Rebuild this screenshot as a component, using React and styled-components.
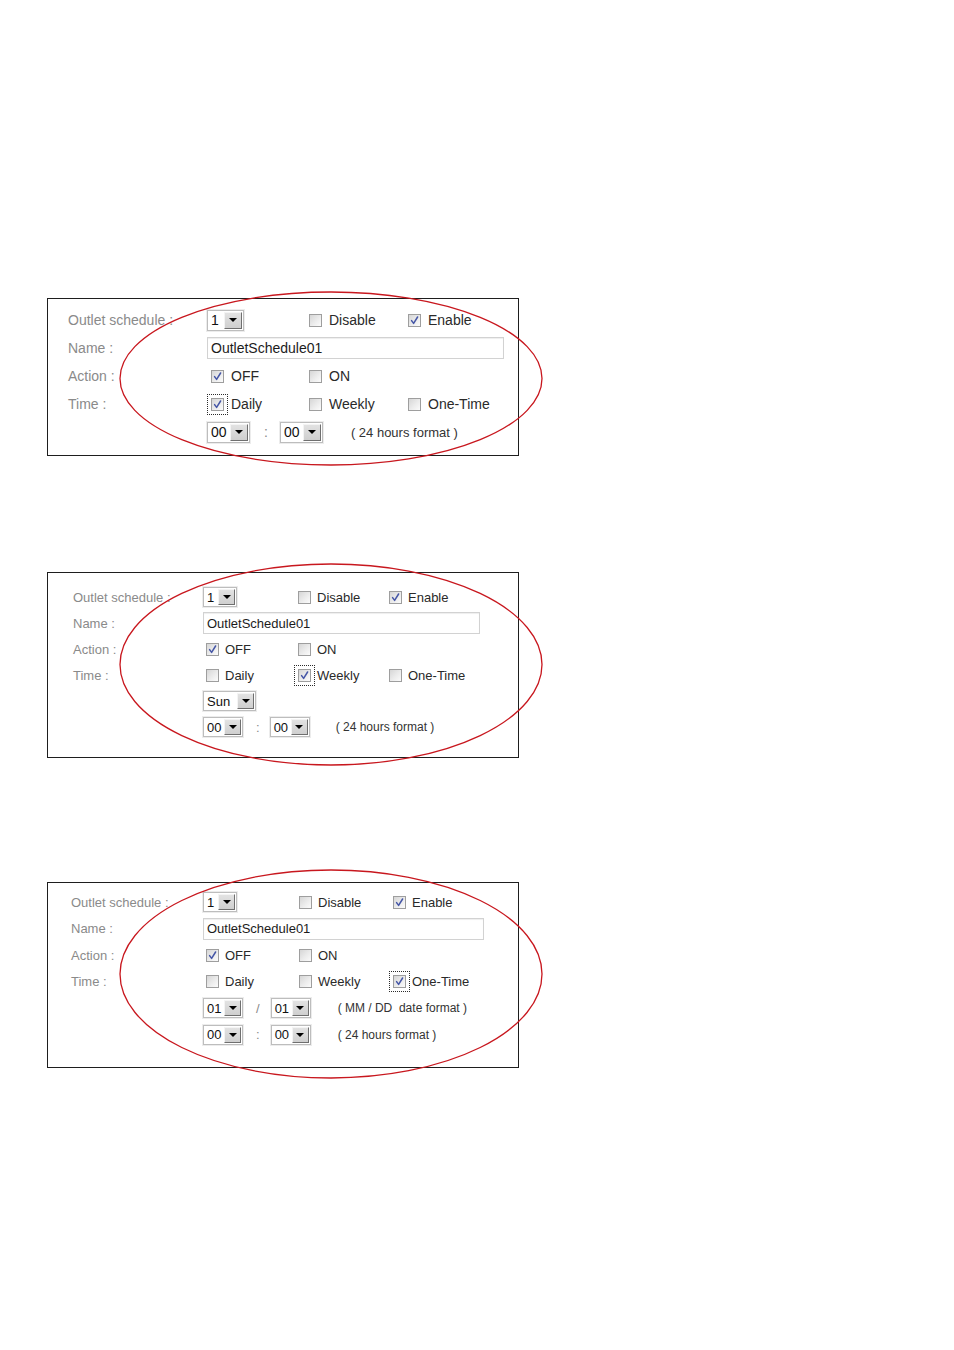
import React from "react";
import styled, { createGlobalStyle } from "styled-components";

const Global = createGlobalStyle`
  html, body { margin: 0; padding: 0; background: #fff; }
  body { font-family: "Liberation Sans", Arial, sans-serif; }
`;

const Page = styled.div`
  width: 954px;
  min-height: 1350px;
  box-sizing: border-box;
  padding: 298px 0 0 47px;
  display: flex;
  flex-direction: column;
`;

const Panel = styled.section`
  position: relative;
  width: 472px;
  box-sizing: border-box;
  border: 1px solid #1e1e1e;
  background: #fff;
  margin-top: ${(p) => p.$mt}px;
  padding: ${(p) => p.$pt}px 0 ${(p) => p.$pb}px ${(p) => p.$pl}px;
  font-size: ${(p) => p.$fs}px;
`;

const Row = styled.div`
  display: grid;
  grid-template-columns: ${(p) => p.$cols};
  height: ${(p) => p.$h}px;
  align-items: center;
`;

const Label = styled.span`
  color: #8a8a8a;
  white-space: nowrap;
`;

const Wide = styled.div`
  grid-column: 2 / -1;
  display: flex;
  align-items: center;
`;

const CheckWrap = styled.span`
  display: inline-flex;
  align-items: center;
  gap: ${(p) => p.$gap}px;
  color: #2a2a2a;
  white-space: nowrap;
`;

const Box = styled.span`
  position: relative;
  display: inline-flex;
  align-items: center;
  justify-content: center;
  width: 13px;
  height: 13px;
  box-sizing: border-box;
  margin-left: ${(p) => p.$ml}px;
  border: 1px solid #9e9e9e;
  background: linear-gradient(135deg, #d6d6d6 0%, #ececec 55%, #fbfbfb 100%);
  outline: ${(p) => (p.$focus ? "1px dotted #2b2b2b" : "none")};
  outline-offset: 3px;
`;

const SelectBox = styled.span`
  display: inline-flex;
  align-items: stretch;
  width: ${(p) => p.$w}px;
  height: ${(p) => p.$h}px;
  box-sizing: border-box;
  border: 1px solid #bdbdbd;
  box-shadow: 0 0 0 1px #ececec;
  background: #fff;
  padding: 1px;
  color: #111;
`;

const SelValue = styled.span`
  flex: 1;
  display: flex;
  align-items: center;
  padding-left: 2px;
  line-height: 1;
`;

const SelBtn = styled.span`
  width: ${(p) => p.$bw}px;
  display: flex;
  align-items: center;
  justify-content: center;
  box-sizing: border-box;
  background: linear-gradient(#e2e2e2, #cfcfcf);
  border: 1px solid;
  border-color: #f4f4f4 #6f6f6f #6f6f6f #f4f4f4;
`;

const Arrow = styled.span`
  width: 0;
  height: 0;
  border-left: 4px solid transparent;
  border-right: 4px solid transparent;
  border-top: 4px solid #000;
`;

const Sep = styled.span`
  color: #8a8a8a;
  margin: 0 ${(p) => p.$mr}px 0 ${(p) => p.$ml}px;
`;

const Hint = styled.span`
  color: #333;
  font-size: ${(p) => p.$fs}px;
  margin-left: ${(p) => p.$ml}px;
  white-space: pre;
`;

const NameInput = styled.input`
  width: ${(p) => p.$w}px;
  height: 22px;
  box-sizing: border-box;
  margin: 0;
  padding: 0 3px;
  border: 1px solid #d2d2d2;
  box-shadow: inset 0 1px 1px rgba(0, 0, 0, 0.07);
  font-family: "Liberation Sans", Arial, sans-serif;
  font-size: inherit;
  color: #1c1c1c;
  background: #fff;
  outline: none;
`;

const Ring = styled.svg`
  position: absolute;
  left: ${(p) => p.$l}px;
  top: ${(p) => p.$t}px;
  overflow: visible;
  pointer-events: none;
`;

function Check({ checked, focus, ml, gap, children }) {
  return (
    <CheckWrap $gap={gap}>
      <Box $focus={focus} $ml={ml}>
        {checked && (
          <svg width="11" height="11" viewBox="0 0 11 11">
            <path d="M2.6 5.6 L4.6 8.4 L8.6 2" fill="none" stroke="#4556a6" strokeWidth="1.5" strokeLinecap="round" strokeLinejoin="round" />
          </svg>
        )}
      </Box>
      {children}
    </CheckWrap>
  );
}

function Select({ value, w, h, bw }) {
  return (
    <SelectBox $w={w} $h={h}>
      <SelValue>{value}</SelValue>
      <SelBtn $bw={bw}>
        <Arrow />
      </SelBtn>
    </SelectBox>
  );
}

function Ellipse({ l, t, w, h }) {
  return (
    <Ring $l={l} $t={t} width={w} height={h} viewBox={`0 0 ${w} ${h}`}>
      <ellipse cx={w / 2} cy={h / 2} rx={w / 2 - 1} ry={h / 2 - 1} fill="none" stroke="#c8171e" strokeWidth="1.3" />
    </Ring>
  );
}

const panels = [
  {
    mt: 0, pt: 7, pb: 9, pl: 20, fs: 14, hfs: 13, h: 28,
    cols: "139px 98px 99px 1fr", nameW: 297, selH: 21, bw: 18,
    one: 37, two: 43, sun: 56, cml: 4, cgap: 7,
    sep: { ml: 14, mr: 12 }, hml: 28,
    time: "daily",
    ell: { l: 71, t: -8, w: 424, h: 175 },
  },
  {
    mt: 116, pt: 11, pb: 17, pl: 25, fs: 13, hfs: 12, h: 26,
    cols: "130px 92px 91px 1fr", nameW: 277, selH: 20, bw: 17,
    one: 34, two: 40, sun: 53, cml: 3, cgap: 6,
    sep: { ml: 13, mr: 10 }, hml: 26,
    time: "weekly",
    ell: { l: 71, t: -10, w: 424, h: 203 },
  },
  {
    mt: 124, pt: 6, pb: 19, pl: 23, fs: 13, hfs: 12, h: 26.5,
    cols: "132px 93px 94px 1fr", nameW: 281, selH: 20, bw: 17,
    one: 34, two: 40, sun: 53, cml: 3, cgap: 6,
    sep: { ml: 13, mr: 11 }, hml: 27,
    time: "onetime",
    ell: { l: 71, t: -14, w: 424, h: 210 },
  },
];

function SchedulePanel({ c }) {
  const sel = (v, w) => <Select value={v} w={w} h={c.selH} bw={c.bw} />;
  const cb = (label, checked, focus) => (
    <Check checked={checked} focus={focus} ml={c.cml} gap={c.cgap}>
      {label}
    </Check>
  );
  const pair = (a, sep, b, hint) => (
    <Wide>
      {sel(a, c.two)}
      <Sep $ml={c.sep.ml} $mr={c.sep.mr}>{sep}</Sep>
      {sel(b, c.two)}
      <Hint $fs={c.hfs} $ml={c.hml}>{hint}</Hint>
    </Wide>
  );
  return (
    <Panel $mt={c.mt} $pt={c.pt} $pb={c.pb} $pl={c.pl} $fs={c.fs}>
      <Row $cols={c.cols} $h={c.h}>
        <Label>Outlet schedule :</Label>
        <div>{sel("1", c.one)}</div>
        {cb("Disable", false, false)}
        {cb("Enable", true, false)}
      </Row>
      <Row $cols={c.cols} $h={c.h}>
        <Label>Name :</Label>
        <Wide>
          <NameInput $w={c.nameW} readOnly value="OutletSchedule01" />
        </Wide>
      </Row>
      <Row $cols={c.cols} $h={c.h}>
        <Label>Action :</Label>
        {cb("OFF", true, false)}
        {cb("ON", false, false)}
      </Row>
      <Row $cols={c.cols} $h={c.h}>
        <Label>Time :</Label>
        {cb("Daily", c.time === "daily", c.time === "daily")}
        {cb("Weekly", c.time === "weekly", c.time === "weekly")}
        {cb("One-Time", c.time === "onetime", c.time === "onetime")}
      </Row>
      {c.time === "weekly" && (
        <Row $cols={c.cols} $h={c.h}>
          <span />
          <Wide>{sel("Sun", c.sun)}</Wide>
        </Row>
      )}
      {c.time === "onetime" && (
        <Row $cols={c.cols} $h={c.h}>
          <span />
          {pair("01", "/", "01", "( MM / DD  date format )")}
        </Row>
      )}
      <Row $cols={c.cols} $h={c.h}>
        <span />
        {pair("00", ":", "00", "( 24 hours format )")}
      </Row>
      <Ellipse {...c.ell} />
    </Panel>
  );
}

export default function App() {
  return (
    <>
      <Global />
      <Page>
        {panels.map((c, i) => (
          <SchedulePanel key={i} c={c} />
        ))}
      </Page>
    </>
  );
}
